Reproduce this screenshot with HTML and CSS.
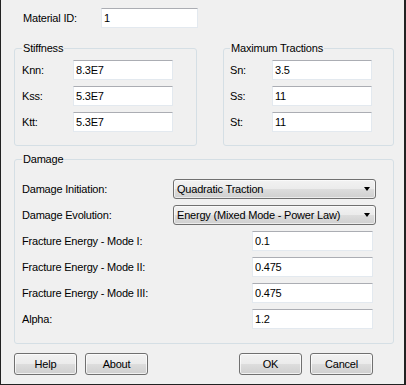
FILE: index.html
```html
<!DOCTYPE html>
<html>
<head>
<meta charset="utf-8">
<link rel="stylesheet" href="styles.css">
</head>
<body>
<div class="window">
  <div class="id-row">
    <span class="lbl id-lbl">Material ID:</span>
    <input class="txt id-input" value="1">
  </div>

  <div class="top-groups">
    <fieldset class="group stiff">
      <legend>Stiffness</legend>
      <div class="rows">
        <div class="row"><span class="lbl k-lbl">Knn:</span><input class="txt small" value="8.3E7"></div>
        <div class="row"><span class="lbl k-lbl">Kss:</span><input class="txt small" value="5.3E7"></div>
        <div class="row"><span class="lbl k-lbl">Ktt:</span><input class="txt small" value="5.3E7"></div>
      </div>
    </fieldset>
    <fieldset class="group tract">
      <legend>Maximum Tractions</legend>
      <div class="rows">
        <div class="row"><span class="lbl s-lbl">Sn:</span><input class="txt small" value="3.5"></div>
        <div class="row"><span class="lbl s-lbl">Ss:</span><input class="txt small" value="11"></div>
        <div class="row"><span class="lbl s-lbl">St:</span><input class="txt small" value="11"></div>
      </div>
    </fieldset>
  </div>

  <fieldset class="group damage">
    <legend>Damage</legend>
    <div class="rows">
      <div class="row"><span class="lbl grow">Damage Initiation:</span><div class="combo"><span>Quadratic Traction</span><span class="arrow"></span></div></div>
      <div class="row"><span class="lbl grow">Damage Evolution:</span><div class="combo"><span>Energy (Mixed Mode - Power Law)</span><span class="arrow"></span></div></div>
      <div class="row"><span class="lbl grow">Fracture Energy - Mode I:</span><input class="txt wide" value="0.1"></div>
      <div class="row"><span class="lbl grow">Fracture Energy - Mode II:</span><input class="txt wide" value="0.475"></div>
      <div class="row"><span class="lbl grow">Fracture Energy - Mode III:</span><input class="txt wide" value="0.475"></div>
      <div class="row"><span class="lbl grow">Alpha:</span><input class="txt wide" value="1.2"></div>
    </div>
  </fieldset>

  <div class="buttons">
    <div class="btn-group">
      <button class="btn">Help</button>
      <button class="btn">About</button>
    </div>
    <div class="btn-group">
      <button class="btn">OK</button>
      <button class="btn">Cancel</button>
    </div>
  </div>
</div>
</body>
</html>
```

FILE: styles.css
```css
* { box-sizing: border-box; }
html, body { margin: 0; padding: 0; background: #f0f0f0; }
body {
  font-family: "Liberation Sans", Arial, sans-serif;
  font-size: 11px;
  letter-spacing: -0.2px;
  color: #000;
}
.window {
  width: 406px;
  height: 385px;
  background: #f0f0f0;
  border-left: 1px solid #222;
  border-right: 2px solid #222;
  border-bottom: 1px solid #222;
  padding: 8px 10px 0 13px;
  display: flex;
  flex-direction: column;
}
.lbl { white-space: nowrap; line-height: 13px; }
.txt {
  font: inherit;
  letter-spacing: inherit;
  color: #000;
  height: 20px;
  border: 1px solid #e3e9ef;
  border-top-color: #abadb3;
  background: #fff;
  padding: 0 2px;
  margin: 0;
  outline: none;
}
.id-row { display: flex; align-items: center; padding-left: 9px; }
.id-lbl { width: 78px; }
.id-input { width: 97px; }

.top-groups {
  display: flex;
  justify-content: space-between;
  margin-top: 14px;
}
.group {
  margin: 0;
  border: 1px solid #d5dfe5;
  border-radius: 3px;
  min-width: 0;
}
.group legend {
  padding: 0 1px;
  margin: 0;
  line-height: 13px;
  font-size: 11px;
}
.stiff { width: 183px; padding: 5px 7px 13px 7px; }
.tract { width: 171px; padding: 5px 6px 13px 6px; }
.rows { display: flex; flex-direction: column; gap: 6px; }
.row { display: flex; align-items: center; }
.k-lbl { width: 51px; }
.s-lbl { width: 42px; }
.small { width: 100px; }

.damage {
  margin-top: 7px;
  width: 380px;
  padding: 13px 7px 14px 7px;
}
.grow { flex: 1; }
.combo {
  width: 203px;
  height: 20px;
  margin-right: 10px;
  border: 1px solid #707070;
  border-radius: 3px;
  background: linear-gradient(#f2f2f2 0%, #ebebeb 50%, #dddddd 51%, #cfcfcf 100%);
  box-shadow: inset 0 0 0 1px rgba(255,255,255,0.6);
  display: flex;
  align-items: center;
  justify-content: space-between;
  padding: 0 5px 0 3px;
  white-space: nowrap;
}
.arrow {
  width: 0;
  height: 0;
  border-left: 3.5px solid transparent;
  border-right: 3.5px solid transparent;
  border-top: 4px solid #000;
}
.wide { width: 121px; margin-right: 13px; }

.buttons {
  display: flex;
  justify-content: space-between;
  margin-top: 9px;
  padding-right: 21px;
}
.btn-group { display: flex; gap: 8px; }
.btn {
  font: inherit;
  letter-spacing: inherit;
  color: #000;
  width: 63px;
  height: 22px;
  margin: 0;
  padding: 0;
  border: 1px solid #707070;
  border-radius: 3px;
  background: linear-gradient(#f2f2f2 0%, #ebebeb 50%, #dddddd 51%, #cfcfcf 100%);
  box-shadow: inset 0 0 0 1px rgba(255,255,255,0.7);
}
```
